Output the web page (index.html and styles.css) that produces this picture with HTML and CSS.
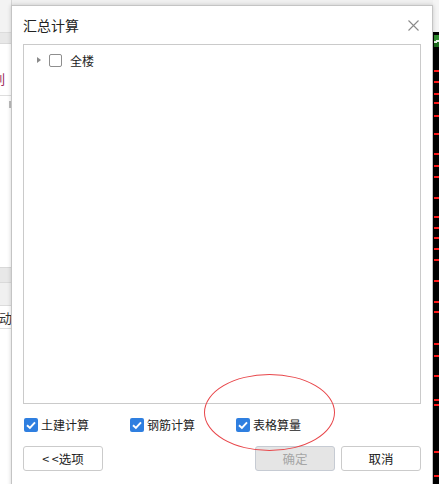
FILE: index.html
```html
<!DOCTYPE html>
<html lang="zh">
<head>
<meta charset="utf-8">
<title>汇总计算</title>
<link rel="stylesheet" href="styles.css">
</head>
<body>
<div class="app">
  <div class="side">
    <div class="side-top"></div>
    <div class="side-band"></div>
    <div class="side-row side-row-a"><span class="cut cut-red">列</span></div>
    <div class="side-body"><span class="thumb"></span></div>
    <div class="side-band side-band-b"></div>
    <div class="side-sub"></div>
    <div class="side-row"><span class="cut">动</span></div>
    <div class="side-rest"></div>
  </div>
  <div class="middle"></div>
  <div class="chart">
    <div class="chart-top"></div>
    <div class="chart-canvas">
      <span class="chart-icon"></span>
      <i class="rl" style="top:38px"></i>
      <i class="rl" style="top:49px"></i>
      <i class="rl" style="top:61px"></i>
      <i class="rl" style="top:70px"></i>
      <i class="rl" style="top:83px"></i>
      <i class="rl" style="top:101px"></i>
      <i class="rl" style="top:121px"></i>
      <i class="rl" style="top:133px"></i>
      <i class="rl" style="top:144px"></i>
      <i class="rl" style="top:165px"></i>
      <i class="rl" style="top:184px"></i>
      <i class="rl" style="top:195px"></i>
      <i class="rl" style="top:205px"></i>
      <i class="rl" style="top:216px"></i>
      <i class="rl" style="top:227px"></i>
      <i class="rl" style="top:248px"></i>
      <i class="rl" style="top:269px"></i>
      <i class="rl" style="top:279px"></i>
      <i class="rl" style="top:311px"></i>
      <i class="rl" style="top:323px"></i>
      <i class="rl" style="top:343px"></i>
      <i class="rl" style="top:367px"></i>
      <i class="rl" style="top:372px"></i>
      <i class="rl" style="top:419px"></i>
      <i class="rl" style="top:443px"></i>
    </div>
  </div>
</div>

<div class="dialog">
  <div class="dlg-head">
    <span class="dlg-title">汇总计算</span>
    <svg class="dlg-close" width="11" height="11" viewBox="0 0 11 11"><path d="M0.5 0.5 L10.5 10.5 M10.5 0.5 L0.5 10.5" stroke="#8a8a8a" stroke-width="1.1" fill="none"/></svg>
  </div>
  <div class="tree">
    <div class="tree-row">
      <span class="tri"></span>
      <span class="cb"></span>
      <span class="tree-label">全楼</span>
    </div>
  </div>
  <div class="opts">
    <label class="opt"><span class="cb cb-on"><svg width="14" height="14" viewBox="0 0 14 14"><path d="M3 7.2 L5.9 10 L11 4.3" stroke="#fff" stroke-width="1.9" fill="none"/></svg></span>土建计算</label>
    <label class="opt"><span class="cb cb-on"><svg width="14" height="14" viewBox="0 0 14 14"><path d="M3 7.2 L5.9 10 L11 4.3" stroke="#fff" stroke-width="1.9" fill="none"/></svg></span>钢筋计算</label>
    <label class="opt"><span class="cb cb-on"><svg width="14" height="14" viewBox="0 0 14 14"><path d="M3 7.2 L5.9 10 L11 4.3" stroke="#fff" stroke-width="1.9" fill="none"/></svg></span>表格算量</label>
  </div>
  <div class="btns">
    <button class="btn">&lt;&thinsp;&lt;选项</button>
    <span class="spacer"></span>
    <button class="btn btn-off">确定</button>
    <button class="btn">取消</button>
  </div>
</div>

<div class="mark"></div>
</body>
</html>
```

FILE: styles.css
```css
html, body {
  margin: 0;
  padding: 0;
  width: 439px;
  height: 484px;
  overflow: hidden;
  background: #ffffff;
  font-family: "Noto Sans CJK SC", "Noto Sans", sans-serif;
  font-size: 12px;
  color: #222;
}

.app {
  display: flex;
  height: 484px;
}

.side {
  width: 11px;
  display: flex;
  flex-direction: column;
  border-right: 1px solid #d6d6d6;
  overflow: hidden;
}
.side-top { height: 32px; background: #f3f3f3; border-bottom: 1px solid #dcdcdc; }
.side-band { height: 10px; background: #e8e8e8; border-bottom: 1px solid #dadada; }
.side-row {
  height: 22px;
  background: #fff;
  border-bottom: 1px solid #dedede;
  position: relative;
  overflow: hidden;
}
.side-row-a { height: 51px; }
.cut {
  position: absolute;
  right: -1px;
  bottom: 3px;
  font-size: 13px;
  line-height: 14px;
  color: #333;
}
.cut-red { color: #9a2a5c; bottom: 9px; right: 6px; }
.side-body { height: 171px; background: #fff; position: relative; }
.thumb {
  position: absolute;
  right: 0;
  top: 5px;
  width: 2px;
  height: 7px;
  background: #bdbdbd;
}
.side-band-b { height: 14px; border-top: 1px solid #d8d8d8; }
.side-sub { height: 22px; background: #f0f0f0; border-bottom: 1px solid #dcdcdc; }
.side-rest { flex: 1; background: #fff; }

.middle { flex: 1; background: #f0f0f0; }

.chart {
  width: 6px;
  display: flex;
  flex-direction: column;
}
.chart-top { height: 32px; background: #f4f4f4; }
.chart-canvas {
  flex: 1;
  background: #000;
  position: relative;
  overflow: hidden;
}
.chart-icon {
  position: absolute;
  left: 1px;
  top: 3px;
  width: 6px;
  height: 12px;
  background: linear-gradient(160deg, #2e8b2e 0 45%, #e8f4e8 45% 60%, #1d6b1d 60%);
}
.rl {
  position: absolute;
  left: 1px;
  right: 0;
  height: 2px;
  background: #ff1a1a;
}

.dialog {
  position: absolute;
  left: 11px;
  top: 5px;
  width: 420px;
  height: 500px;
  background: #fff;
  border: 1px solid #c4c4c4;
  box-shadow: 0 0 4px rgba(0, 0, 0, 0.18);
  display: flex;
  flex-direction: column;
}

.dlg-head {
  height: 38px;
  display: flex;
  align-items: center;
  padding: 0 13px 0 11px;
}
.dlg-title {
  flex: 1;
  font-size: 14px;
  color: #222;
  margin-top: -1px;
}
.dlg-close { display: block; }

.tree {
  height: 360px;
  box-sizing: border-box;
  margin: 0 11px;
  border: 1px solid #cacaca;
}
.tree-row {
  display: flex;
  align-items: center;
  height: 16px;
  margin-top: 7px;
  padding-left: 13px;
}
.tri {
  width: 0;
  height: 0;
  border-top: 3.5px solid transparent;
  border-bottom: 3.5px solid transparent;
  border-left: 4px solid #8a8a8a;
  margin-right: 8px;
}
.cb {
  width: 13px;
  height: 13px;
  box-sizing: border-box;
  border: 1px solid #8e8e8e;
  border-radius: 2px;
  background: #fff;
  display: inline-flex;
  align-items: center;
  justify-content: center;
  flex: none;
}
.tree-label { margin-left: 8px; color: #222; }

.opts {
  display: grid;
  grid-template-columns: 106px 106px 106px;
  margin: 14px 0 0 12px;
  height: 14px;
}
.opt {
  display: flex;
  align-items: center;
  gap: 3px;
  color: #222;
  line-height: 14px;
}
.cb-on {
  width: 14px;
  height: 14px;
  border: none;
  background: #2f7fe0;
  border-radius: 2px;
}
.cb-on svg { display: block; }

.btns {
  display: flex;
  gap: 6px;
  margin: 14px 11px 0 11px;
  height: 25px;
}
.spacer { flex: 1; }
.btn {
  width: 80px;
  height: 25px;
  box-sizing: border-box;
  border: 1px solid #cbcbcb;
  border-radius: 3px;
  background: #fff;
  font-family: "Noto Sans CJK SC", "Noto Sans", sans-serif;
  font-size: 12.5px;
  color: #222;
  padding: 0;
  line-height: 22px;
}
.btn-off {
  background: #e5e5e5;
  border-color: #c6cbd3;
  color: #a6a6a6;
}

.mark {
  position: absolute;
  left: 204px;
  top: 374px;
  width: 131px;
  height: 77px;
  box-sizing: border-box;
  border: 1px solid #e8464a;
  border-radius: 50%;
}
```
